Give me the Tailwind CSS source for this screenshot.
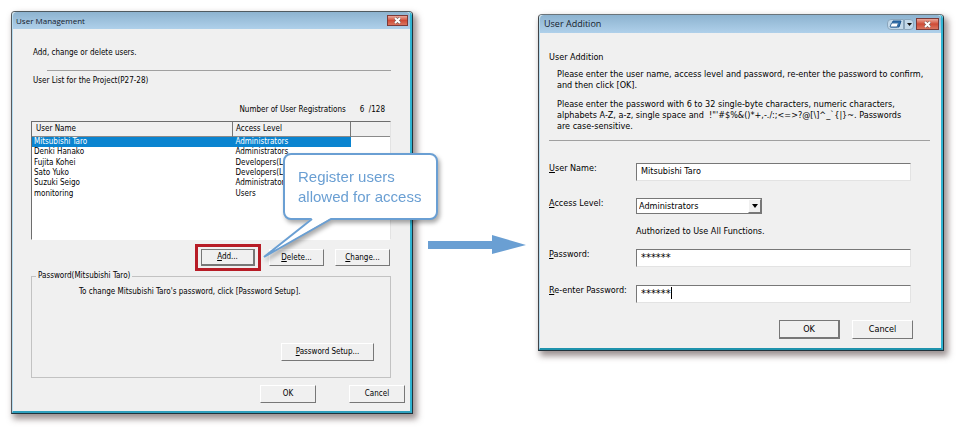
<!DOCTYPE html>
<html lang="en">
<head>
<meta charset="utf-8">
<title>User Management</title>
<script src="https://cdn.jsdelivr.net/npm/@tailwindcss/browser@4"></script>
</head>
<body class="bg-white text-black font-['DejaVu_Sans_Condensed','Open_Sans',sans-serif]">
<main class="flex min-h-screen items-start pl-[11px] pr-4 pt-[11px]">

  <section aria-labelledby="t1" class="relative flex-[402] rounded-t-sm border border-l-[#555b60] border-t-[#4f5a60] border-r-[#20333c] border-b-[#20333c] shadow-[3px_4px_6px_1px_#5a4a4a99] text-[8px] leading-[10px]">
    <div class="border-r-2 border-b-2 border-l border-l-[#b7dcef] border-r-[#2fb4d2] border-b-[#2fa0bd] bg-[#f0f0f0] rounded-t-sm">
      <header class="flex h-[17px] items-center justify-between bg-gradient-to-b from-[#8db3d0] to-[#afd0ea] pl-[3px] pr-[2px] rounded-t-sm">
        <h1 id="t1" class="font-['Open_Sans',sans-serif] text-[8px] leading-3 text-[#14202c]">User Management</h1>
        <button aria-label="Close" class="flex h-[11px] w-[21px] items-center justify-center border border-[#7c3a38] bg-gradient-to-b from-[#e9a79b] via-[#cf4a36] to-[#d9745f]">
          <svg width="9" height="7" viewBox="0 0 9 7"><path d="M2 1L7 6M7 1L2 6" stroke="#6b5350" stroke-width="3"/><path d="M2 1L7 6M7 1L2 6" stroke="#fff" stroke-width="2"/></svg>
        </button>
      </header>
      <div class="pl-[18px] pr-[19px]">
        <p class="pt-[19px] pl-[2px]">Add, change or delete users.</p>
        <hr class="mt-3 ml-4 border-t border-[#a0a0a0]">
        <p class="mt-[5px] pl-[2px]">User List for the Project(P27-28)</p>
        <p class="mt-[19px] flex justify-end gap-[14px] pr-[6px]"><span>Number of User Registrations</span><span class="whitespace-pre">6  /128</span></p>
        <div class="mt-[6px] h-[119px] border-t border-l border-r border-b border-t-[#6d6d6d] border-l-[#6d6d6d] border-r-[#e3e3e3] border-b-[#fff] bg-white">
          <table class="h-[77px] w-full table-fixed border-collapse text-left">
            <colgroup><col class="w-[56%]"><col class="w-[33%]"><col></colgroup>
            <thead class="bg-[#f0f0f0]">
              <tr class="h-[14px] border-b border-[#8a8a8a]"><th class="border-r border-[#777] py-0 pl-1 font-normal">User Name</th><th class="border-r border-[#777] py-0 pl-[3px] font-normal">Access Level</th><th></th></tr>
            </thead>
            <tbody>
              <tr class="text-white"><td class="bg-[#0a84d0] pl-[2px]">Mitsubishi Taro</td><td class="bg-[#0a84d0] pl-[3px]">Administrators</td><td></td></tr>
              <tr><td class="pl-[2px]">Denki Hanako</td><td class="pl-[3px]">Administrators</td><td></td></tr>
              <tr><td class="pl-[2px]">Fujita Kohei</td><td class="pl-[3px]">Developers(Le</td><td></td></tr>
              <tr><td class="pl-[2px]">Sato Yuko</td><td class="pl-[3px]">Developers(Le</td><td></td></tr>
              <tr><td class="pl-[2px]">Suzuki Seigo</td><td class="pl-[3px]">Administrators</td><td></td></tr>
              <tr><td class="pl-[2px]">monitoring</td><td class="pl-[3px]">Users</td><td></td></tr>
            </tbody>
          </table>
        </div>
        <div class="mt-1 flex items-center justify-end">
          <div class="mr-2 border-[3px] border-[#b71c26] px-[3px] py-[2px]">
            <button class="block h-[17px] w-[54px] border-2 border-t border-l border-[#777] bg-[#f0f0f0]"><u>A</u>dd...</button>
          </div>
          <button class="mr-[11px] h-[17px] w-[55px] border border-t-white border-l-white border-r-[#777] border-b-[#777] bg-[#f0f0f0]"><u>D</u>elete...</button>
          <button class="mr-[1px] h-[17px] w-[55px] border border-t-white border-l-white border-r-[#777] border-b-[#777] bg-[#f0f0f0]"><u>C</u>hange...</button>
        </div>
        <fieldset class="h-[107px] border border-[#c2c2c2] pl-[47px] pr-4">
          <legend class="-ml-[43px] px-[2px]">Password(Mitsubishi Taro)</legend>
          <p class="mt-[6px]">To change Mitsubishi Taro's password, click [Password Setup].</p>
          <div class="mt-[46px] flex justify-end">
            <button class="h-[18px] w-[93px] border border-t-white border-l-white border-r-[#777] border-b-[#777] bg-[#f0f0f0]"><u>P</u>assword Setup...</button>
          </div>
        </fieldset>
      </div>
      <footer class="mt-[7px] flex justify-end gap-[33px] pr-[5px] pb-2">
        <button class="h-[18px] w-[56px] border border-t-white border-l-white border-r-[#777] border-b-[#777] bg-[#f0f0f0]">OK</button>
        <button class="h-[18px] w-[56px] border border-t-white border-l-white border-r-[#777] border-b-[#777] bg-[#f0f0f0]">Cancel</button>
      </footer>
    </div>

    <aside class="absolute top-[141px] -right-[26px] w-[155px] drop-shadow-[2px_3px_2px_#0005]">
      <p class="rounded-lg border-2 border-[#6a9fd3] bg-white pt-3 pb-[11px] pl-[13px] font-['Liberation_Sans',Arial,sans-serif] text-[15px] leading-5 whitespace-nowrap text-[#6a9fd3]">Register users<br>allowed for access</p>
      <svg class="absolute top-[63px] -left-5" width="70" height="42" viewBox="0 0 70 42"><path d="M49 0V2L1 41L68 2V0Z" fill="#fff"/><path d="M49 3L1 41L68 3" fill="none" stroke="#6a9fd3" stroke-width="2" stroke-linejoin="bevel"/></svg>
    </aside>
  </section>

  <svg class="mt-[224px] ml-[15px] mr-[11px] h-[20px] w-[99px] shrink-0" viewBox="0 0 99 20"><path d="M0 6H64V0L98 10L64 19V14H0Z" fill="#6a9fd3"/></svg>

  <section aria-labelledby="t2" class="mt-[3px] flex-[406] rounded-t border border-l-[#404448] border-t-[#6a747a] border-r-[#20333c] border-b-[#20333c] shadow-[3px_4px_6px_1px_#5a4a4a99] text-[9px] leading-[11px]">
    <div class="rounded-t border-r-2 border-b-2 border-l border-l-[#b7dcef] border-r-[#2fb4d2] border-b-[#1f93ad] bg-[#f0f0f0]">
      <header class="flex h-[18px] items-center rounded-t bg-gradient-to-b from-[#8db3d0] to-[#afd0ea] pl-1 pr-[2px]">
        <h2 id="t2" class="mr-auto font-['Open_Sans',sans-serif] text-[9px] leading-3 text-[#14202c]">User Addition</h2>
        <button aria-label="Switch window" class="flex h-[11px] w-[17px] items-center justify-center rounded-l-sm border border-[#8ba6bc] bg-[#c3d9ea]">
          <svg width="13" height="9" viewBox="0 0 13 9"><path d="M4 1H12L10 7H2Z" fill="#2a6fb0" stroke="#1f558c"/><path d="M2.500 3H9.500L8 7H1Z" fill="#fff" stroke="#3c6f9f"/></svg>
        </button>
        <button aria-label="Window menu" class="mr-[2px] flex h-[11px] w-[10px] items-center justify-center rounded-r-sm border border-[#8ba6bc] bg-[#c3d9ea]">
          <svg width="5" height="3" viewBox="0 0 5 3"><path d="M0 0H5L2.500 3Z" fill="#111"/></svg>
        </button>
        <button aria-label="Close" class="flex h-[12px] w-[23px] items-center justify-center border border-[#7c3a38] bg-gradient-to-b from-[#e9a79b] via-[#cf4a36] to-[#d9745f]">
          <svg width="9" height="7" viewBox="0 0 9 7"><path d="M2 1L7 6M7 1L2 6" stroke="#6b5350" stroke-width="3"/><path d="M2 1L7 6M7 1L2 6" stroke="#fff" stroke-width="2"/></svg>
        </button>
      </header>
      <form class="pl-[9px] pr-[11px] pb-[9px]">
        <h3 class="pt-[19px]">User Addition</h3>
        <p class="mt-[6px] pl-2">Please enter the user name, access level and password, re-enter the password to confirm,<br>and then click [OK].</p>
        <p class="mt-2 pl-2">Please enter the password with 6 to 32 single-byte characters, numeric characters,<br>alphabets A-Z, a-z, single space and &nbsp;!"'#$%&amp;()*+,-./:;&lt;=&gt;?@[\]^_`{|}~. Passwords<br>are case-sensitive.</p>
        <hr class="mt-2 border-t border-[#a0a0a0]">
        <div class="mt-[22px] grid grid-cols-[87px_1fr] pr-[19px]">
          <label for="un" class="h-[35px]"><u>U</u>ser Name:</label>
          <input id="un" value="Mitsubishi Taro" class="h-[18px] border border-t-[#777] border-l-[#777] border-r-[#e3e3e3] border-b-[#e3e3e3] bg-white px-1 pb-[2px]">
          <label for="al"><u>A</u>ccess Level:</label>
          <div class="relative w-[126px]">
            <select id="al" class="block h-4 w-full appearance-none border border-[#777] bg-white pl-[2px]"><option>Administrators</option></select>
            <span class="pointer-events-none absolute top-[1px] right-[1px] flex h-[14px] w-[13px] items-center justify-center border border-t-white border-l-white border-r-[#777] border-b-[#777] bg-[#f0f0f0]"><svg width="6" height="4" viewBox="0 0 6 4"><path d="M0 0H6L3 4Z"/></svg></span>
          </div>
          <p class="col-start-2 mt-3 mb-3">Authorized to Use All Functions.</p>
          <label for="pw" class="h-9"><u>P</u>assword:</label>
          <input id="pw" value="******" class="h-[18px] border border-t-[#777] border-l-[#777] border-r-[#e3e3e3] border-b-[#e3e3e3] bg-white px-1 pb-[2px] text-[11px]">
          <label for="rp"><u>R</u>e-enter Password:</label>
          <div class="relative">
            <input id="rp" value="******" class="block h-[18px] w-full border border-t-[#777] border-l-[#777] border-r-[#e3e3e3] border-b-[#e3e3e3] bg-white px-1 pb-[2px] text-[11px]">
            <span class="pointer-events-none absolute top-[2px] left-[35px] h-3 w-px bg-black"></span>
          </div>
        </div>
        <div class="mt-[17px] flex justify-end gap-3 pr-[17px]">
          <button type="button" class="h-[19px] w-[61px] border-2 border-t border-l border-[#777] bg-[#f0f0f0]">OK</button>
          <button type="button" class="h-[19px] w-[61px] border border-t-white border-l-white border-r-[#777] border-b-[#777] bg-[#f0f0f0]">Cancel</button>
        </div>
      </form>
    </div>
  </section>
</main>
</body>
</html>
